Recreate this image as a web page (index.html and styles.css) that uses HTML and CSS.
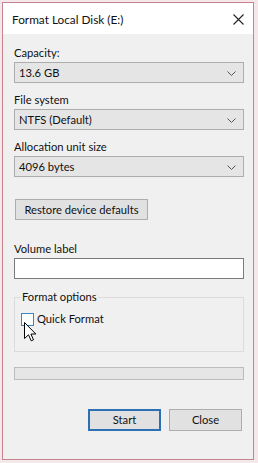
FILE: index.html
```html
<!DOCTYPE html>
<html>
<head>
<meta charset="utf-8">
<link rel="stylesheet" href="styles.css">
</head>
<body>
<div class="window">
  <div class="titlebar">
    <span class="title">Format Local Disk (E:)</span>
    <svg class="close" width="11" height="11" viewBox="0 0 11 11"><path d="M0.5 0.5 L10.5 10.5 M10.5 0.5 L0.5 10.5" stroke="#222" stroke-width="1.1" fill="none"/></svg>
  </div>
  <div class="content">
    <div class="label">Capacity:</div>
    <div class="combo"><span>13.6 GB</span><svg class="chev" width="9" height="5" viewBox="0 0 9 5"><path d="M0.5 0.5 L4.5 4.5 L8.5 0.5" stroke="#555" fill="none"/></svg></div>
    <div class="label">File system</div>
    <div class="combo"><span>NTFS (Default)</span><svg class="chev" width="9" height="5" viewBox="0 0 9 5"><path d="M0.5 0.5 L4.5 4.5 L8.5 0.5" stroke="#555" fill="none"/></svg></div>
    <div class="label">Allocation unit size</div>
    <div class="combo"><span>4096 bytes</span><svg class="chev" width="9" height="5" viewBox="0 0 9 5"><path d="M0.5 0.5 L4.5 4.5 L8.5 0.5" stroke="#555" fill="none"/></svg></div>
    <div class="restore-row"><div class="btn restore">Restore device defaults</div></div>
    <div class="label vol">Volume label</div>
    <div class="input"></div>
    <fieldset class="group">
      <legend>Format options</legend>
      <div class="check-row">
        <span class="checkbox"></span><span class="check-text">Quick Format</span>
        <svg class="cursor" width="13" height="20" viewBox="0 0 13 20"><path d="M0.5 0.5 L0.5 16.5 L4.5 12.8 L7.2 18.8 L9.5 17.8 L6.9 12 L11.8 12 Z" fill="#fff" stroke="#000" stroke-width="1" stroke-linejoin="miter"/></svg>
      </div>
    </fieldset>
    <div class="progress"></div>
    <div class="buttons">
      <div class="btn start">Start</div>
      <div class="btn close-btn">Close</div>
    </div>
  </div>
</div>
</body>
</html>
```
FILE: styles.css
```css
html, body {
  margin: 0;
  padding: 0;
}
body {
  background: #f6e8ea;
  width: 258px;
  height: 463px;
  overflow: hidden;
  font-family: "Lato", "Noto Sans", sans-serif;
  font-size: 11.2px;
  color: #111;
}
.window {
  margin: 2px 0 0 2px;
  width: 250px;
  height: 456px;
  border: 1px solid #c3858f;
  background: #f0f0f0;
  display: flex;
  flex-direction: column;
}
.titlebar {
  height: 31px;
  background: #fff;
  display: flex;
  align-items: center;
  justify-content: space-between;
  padding: 0 9px 0 9px;
  flex: none;
}
.title {
  font-size: 11.8px;
  color: #111;
  margin-top: 1px;
}
.close {
  margin-right: 0px;
  margin-top: 2px;
}
.content {
  padding: 11px 9px 0 11px;
  display: flex;
  flex-direction: column;
}
.label {
  height: 16px;
  line-height: 16px;
  margin-bottom: 1px;
}
.combo {
  height: 19px;
  border: 1px solid #adadad;
  background: #e5e5e5;
  display: flex;
  align-items: center;
  justify-content: space-between;
  padding: 0 7px 0 4px;
  margin-bottom: 9px;
  line-height: 19px;
}
.chev {
  margin-top: 1px;
}
.restore-row {
  display: flex;
  margin-top: 13px;
}
.btn {
  height: 19px;
  line-height: 19px;
  border: 1px solid #adadad;
  background: #e1e1e1;
  text-align: center;
}
.restore {
  margin-left: 1px;
  width: 131px;
}
.vol {
  margin-top: 21px;
}
.input {
  height: 19px;
  border: 1px solid #7a7a7a;
  background: #fff;
}
.group {
  margin: 10px 0 0 0;
  padding: 0 6px 0 6px;
  border: 1px solid #dcdcdc;
  height: 63px;
  box-sizing: border-box;
  min-width: 0;
}
.group legend {
  padding: 0 1px;
  line-height: 16px;
  height: 16px;
}
.check-row {
  position: relative;
  display: flex;
  align-items: center;
  margin-top: 7px;
  height: 14px;
}
.checkbox {
  width: 11px;
  height: 11px;
  border: 1px solid #3d86c0;
  background: #fbfdff;
  margin-right: 3px;
}
.check-text {
  line-height: 14px;
}
.cursor {
  position: absolute;
  left: 3px;
  top: 10px;
}
.progress {
  margin-top: 15px;
  height: 11px;
  border: 1px solid #bcbcbc;
  background: #e6e6e6;
}
.buttons {
  display: flex;
  justify-content: flex-end;
  gap: 8px;
  margin-top: 29px;
  padding-right: 2px;
}
.start {
  width: 69px;
  height: 18px;
  line-height: 18px;
  border: 2px solid #2a70b2;
}
.close-btn {
  width: 71px;
  height: 20px;
  line-height: 20px;
}
```
